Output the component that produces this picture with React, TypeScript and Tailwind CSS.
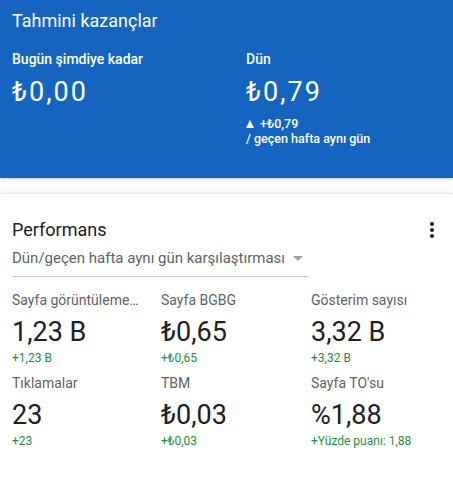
import React from "react";

type Metric = { label: string; value: string; delta: string };

const metrics: Metric[] = [
  { label: "Sayfa görüntülemeleri", value: "1,23 B", delta: "+1,23 B" },
  { label: "Sayfa BGBG", value: "₺0,65", delta: "+₺0,65" },
  { label: "Gösterim sayısı", value: "3,32 B", delta: "+3,32 B" },
  { label: "Tıklamalar", value: "23", delta: "+23" },
  { label: "TBM", value: "₺0,03", delta: "+₺0,03" },
  { label: "Sayfa TO'su", value: "%1,88", delta: "+Yüzde puanı: 1,88" },
];

const sans = { fontFamily: "Roboto, 'Noto Sans', Arial, sans-serif" };

const MoreIcon = () => (
  <svg width="4" height="16" viewBox="0 0 4 16" fill="#202124">
    <circle cx="2" cy="2" r="2" />
    <circle cx="2" cy="8" r="2" />
    <circle cx="2" cy="14" r="2" />
  </svg>
);

export default function App() {
  return (
    <div className="w-[453px] h-[489px] bg-white overflow-hidden" style={sans}>
      {/* Tahmini kazançlar */}
      <div className="h-[178px] bg-[#1565c0] text-white px-3 pt-[9px] shadow-[0_1px_3px_rgba(60,64,67,0.3)]">
        <div className="text-[18px] leading-[24px]">Tahmini kazançlar</div>
        <div className="grid grid-cols-[234px_1fr] mt-4">
          <div>
            <div className="text-[14px] leading-[20px] font-medium">Bugün şimdiye kadar</div>
            <div className="text-[27px] leading-[32px] tracking-[2px] mt-[7px]">₺0,00</div>
          </div>
          <div>
            <div className="text-[14px] leading-[20px] font-medium">Dün</div>
            <div className="text-[27px] leading-[32px] tracking-[2px] mt-[7px]">₺0,79</div>
            <div className="text-[12.5px] leading-[15px] font-medium mt-[8px]">
              <div className="flex items-center">
                <svg className="mr-[6px]" width="8" height="8" viewBox="0 0 8 8" fill="#fff">
                  <path d="M4 0L8 8H0z" />
                </svg>
                +₺0,79
              </div>
              <div>/ geçen hafta aynı gün</div>
            </div>
          </div>
        </div>
      </div>

      {/* Performans */}
      <div className="mt-[15px] border-t border-[#e8eaed] shadow-[0_-1px_2px_rgba(60,64,67,0.08)] px-3 pt-6">
        <div className="flex items-center justify-between pr-[7px]">
          <div className="text-[18px] leading-[24px] text-[#202124]">Performans</div>
          <MoreIcon />
        </div>
        <div className="w-[297px] mt-[6px] pb-2 border-b border-[#c4c7c9] flex items-center">
          <span className="text-[15px] leading-[20px] text-[#5f6368]">
            Dün/geçen hafta aynı gün karşılaştırması
          </span>
          <svg className="ml-[8px] mt-[1px]" width="10" height="5" viewBox="0 0 10 5" fill="#9aa0a6">
            <path d="M0 0h10L5 5z" />
          </svg>
        </div>

        <div className="grid grid-cols-[149px_150px_1fr] gap-y-[7px] mt-[13px]">
          {metrics.map((m) => (
            <div key={m.label} className="min-w-0">
              <div className="max-w-[129px] text-[14px] leading-[20px] text-[#5f6368] truncate">{m.label}</div>
              <div className="text-[27px] leading-[32px] text-[#202124] mt-[6px]">{m.value}</div>
              <div className="text-[12px] leading-[16px] text-[#1e8e3e] mt-[2px]">{m.delta}</div>
            </div>
          ))}
        </div>
      </div>
    </div>
  );
}
